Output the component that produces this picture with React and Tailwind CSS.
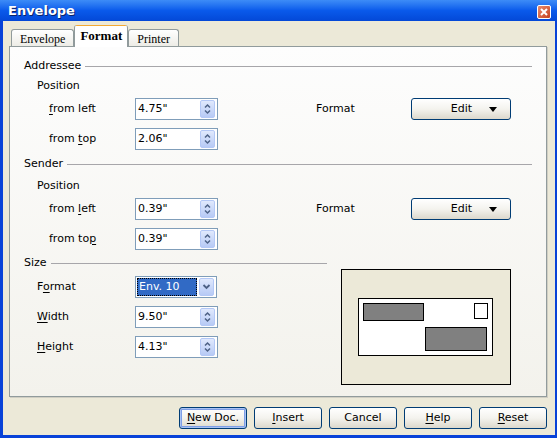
import React from 'react';

const uiFont = { fontFamily: '"DejaVu Sans", Verdana, sans-serif' };

// small up/down arrows used in the spin buttons
const SpinButton = () => (
  <div className="my-px mr-[2px] flex w-[15px] items-center justify-center rounded-[2px] border border-[#b4c8f6] bg-gradient-to-b from-[#e0e9fd] to-[#b7caf5]">
    <svg width="9" height="14" viewBox="0 0 9 14">
      <path d="M2 5.5 L4.5 3 L7 5.5" fill="none" stroke="#4d6185" strokeWidth="1.5" />
      <path d="M2 8.5 L4.5 11 L7 8.5" fill="none" stroke="#4d6185" strokeWidth="1.5" />
    </svg>
  </div>
);

const SpinField = ({ value }) => (
  <div className="flex h-[22px] w-[83px] items-stretch border border-[#7f9db9] bg-white">
    <span className="flex flex-1 items-center pl-[2px] text-black">{value}</span>
    <SpinButton />
  </div>
);

const ComboField = ({ value }) => (
  <div className="flex h-[22px] w-[82px] items-stretch border border-[#7f9db9] bg-white p-px">
    <span className="flex flex-1 items-center border border-dotted border-black bg-[#316ac5] pl-px text-white">
      {value}
    </span>
    <div className="ml-[2px] mr-px flex w-[15px] items-center justify-center rounded-[2px] border border-[#b4c8f6] bg-gradient-to-b from-[#e0e9fd] to-[#b7caf5]">
      <svg width="9" height="8" viewBox="0 0 9 8">
        <path d="M1.5 2 L4.5 5 L7.5 2" fill="none" stroke="#4d6185" strokeWidth="1.8" />
      </svg>
    </div>
  </div>
);

// label with one underlined mnemonic letter
const Mn = ({ before = '', letter, after = '' }) => (
  <span>
    {before}
    <span className="underline underline-offset-2">{letter}</span>
    {after}
  </span>
);

const Heading = ({ children, lineEnd = 'mr-[14px]' }) => (
  <div className={`flex h-[16px] items-center pl-[14px] ${lineEnd}`}>
    <span className="pr-[4px]">{children}</span>
    <div className="h-px flex-1 bg-[#a7a6aa]" />
  </div>
);

const XpButton = ({ children, width = 'w-[68px]', isDefault = false }) => (
  <button
    className={`flex h-[22px] ${width} items-center justify-center rounded-[3px] border border-[#003c74] bg-gradient-to-b from-[#ffffff] via-[#f4f3ee] to-[#dcd8cc] text-black ${
      isDefault ? 'shadow-[inset_0_0_0_1px_#a9c2f3,inset_0_0_0_2px_#7e9ee6]' : ''
    }`}
  >
    {children}
  </button>
);

const EditButton = () => (
  <button className="flex h-[22px] w-[100px] items-center rounded-[3px] border border-[#003c74] bg-gradient-to-b from-[#ffffff] via-[#f4f3ee] to-[#dcd8cc] text-black">
    <span className="flex-1 pl-[22px] text-center">Edit</span>
    <svg width="8" height="5" viewBox="0 0 8 5" className="mr-[13px]">
      <path d="M0 0 H8 L4 5 Z" fill="#000" />
    </svg>
  </button>
);

const PositionRow = ({ label, value, withFormat = false }) => (
  <div className="flex h-[22px] items-center pl-[39px]">
    <span className="w-[86px]">{label}</span>
    <SpinField value={value} />
    {withFormat && (
      <>
        <span className="ml-[98px] w-[95px]">Format</span>
        <EditButton />
      </>
    )}
  </div>
);

const Preview = () => (
  <svg width="170" height="116" viewBox="0 0 170 116">
    <rect x="0.5" y="0.5" width="169" height="115" fill="#ece9d8" stroke="#000" />
    <rect x="17.5" y="29.5" width="134" height="57" fill="#fff" stroke="#000" />
    <rect x="22.5" y="34.5" width="60" height="17" fill="#808080" stroke="#000" />
    <rect x="133.5" y="34.5" width="13" height="15" fill="#fff" stroke="#000" />
    <rect x="84.5" y="58.5" width="61" height="23" fill="#808080" stroke="#000" />
  </svg>
);

const Tab = ({ children, active = false }) =>
  active ? (
    <div className="relative z-10 flex h-[22px] w-[54px] flex-col overflow-hidden rounded-t-[3px] border-x border-[#919b9c] bg-white">
      <div className="h-[3px] bg-gradient-to-b from-[#e68b2c] to-[#ffc73c]" />
      <div
        className="flex flex-1 items-center justify-center pb-[2px] text-[13px] font-bold text-black"
        style={{ fontFamily: '"Liberation Serif", "Times New Roman", serif' }}
      >
        {children}
      </div>
    </div>
  ) : (
    <div
      className="flex h-[18px] items-center rounded-t-[3px] border border-b-0 border-[#919b9c] bg-gradient-to-b from-[#ffffff] to-[#ecebe5] px-[8px] text-[12px] text-black"
      style={{ fontFamily: '"Liberation Serif", "Times New Roman", serif' }}
    >
      {children}
    </div>
  );

export default function App() {
  return (
    <div
      className="flex h-[438px] w-[557px] flex-col bg-[#0842d8] text-[11px] text-black"
      style={uiFont}
    >
      {/* title bar */}
      <div className="flex h-[21px] items-center bg-gradient-to-b from-[#3d8cf7] via-[#0a5aeb] to-[#0448d7] pl-[8px] pr-[6px]">
        <span className="flex-1 text-[13px] font-bold text-white [text-shadow:1px_1px_0_#0a246a]">
          Envelope
        </span>
        <div className="mt-[2px] flex h-[14px] w-[14px] items-center justify-center rounded-[2px] border border-white bg-gradient-to-br from-[#e98a6c] to-[#c4401c]">
          <svg width="8" height="8" viewBox="0 0 8 8">
            <path d="M1 1 L7 7 M7 1 L1 7" stroke="#fff" strokeWidth="2" />
          </svg>
        </div>
      </div>

      {/* client area */}
      <div className="mx-[3px] mb-[3px] mr-[2px] flex flex-1 flex-col bg-[#ece9d8] pl-[6px] pr-[8px] pt-[4px]">
        {/* tabs */}
        <div className="-mb-px flex h-[22px] items-end pl-[2px]">
          <Tab>Envelope</Tab>
          <Tab active>Format</Tab>
          <Tab>Printer</Tab>
        </div>

        {/* tab page */}
        <div className="flex h-[351px] flex-col border border-[#919b9c] bg-gradient-to-b from-[#fdfdfd] to-[#f3f2ec] pt-[11px] shadow-[1px_1px_0_#d0cec3]">
          <Heading>Addressee</Heading>
          <div className="mt-[4px] flex h-[16px] items-center pl-[27px]">Position</div>
          <div className="mt-[4px]">
            <PositionRow label={<Mn letter="f" after="rom left" />} value={'4.75"'} withFormat />
          </div>
          <div className="mt-[8px]">
            <PositionRow label={<Mn before="from " letter="t" after="op" />} value={'2.06"'} />
          </div>

          <div className="mt-[6px]">
            <Heading>Sender</Heading>
          </div>
          <div className="mt-[6px] flex h-[16px] items-center pl-[27px]">Position</div>
          <div className="mt-[4px]">
            <PositionRow label={<Mn before="from " letter="l" after="eft" />} value={'0.39"'} withFormat />
          </div>
          <div className="mt-[8px]">
            <PositionRow label={<Mn before="from to" letter="p" />} value={'0.39"'} />
          </div>

          {/* size + preview */}
          <div className="mt-[5px] flex">
            <div className="flex w-[317px] flex-col">
              <Heading lineEnd="mr-0">Size</Heading>
              <div className="mt-[5px] flex h-[22px] items-center pl-[27px]">
                <span className="w-[98px]">
                  <Mn before="F" letter="o" after="rmat" />
                </span>
                <ComboField value="Env. 10" />
              </div>
              <div className="mt-[8px] flex h-[22px] items-center pl-[27px]">
                <span className="w-[98px]">
                  <Mn letter="W" after="idth" />
                </span>
                <SpinField value={'9.50"'} />
              </div>
              <div className="mt-[8px] flex h-[22px] items-center pl-[27px]">
                <span className="w-[98px]">
                  <Mn letter="H" after="eight" />
                </span>
                <SpinField value={'4.13"'} />
              </div>
            </div>
            <div className="ml-[14px] mt-[14px]">
              <Preview />
            </div>
          </div>
        </div>

        {/* dialog buttons */}
        <div className="mt-[10px] flex justify-end gap-[7px]">
          <XpButton isDefault>
            <Mn letter="N" after="ew Doc." />
          </XpButton>
          <XpButton>
            <Mn letter="I" after="nsert" />
          </XpButton>
          <XpButton>Cancel</XpButton>
          <XpButton>
            <Mn letter="H" after="elp" />
          </XpButton>
          <XpButton>
            <Mn letter="R" after="eset" />
          </XpButton>
        </div>
      </div>
    </div>
  );
}
